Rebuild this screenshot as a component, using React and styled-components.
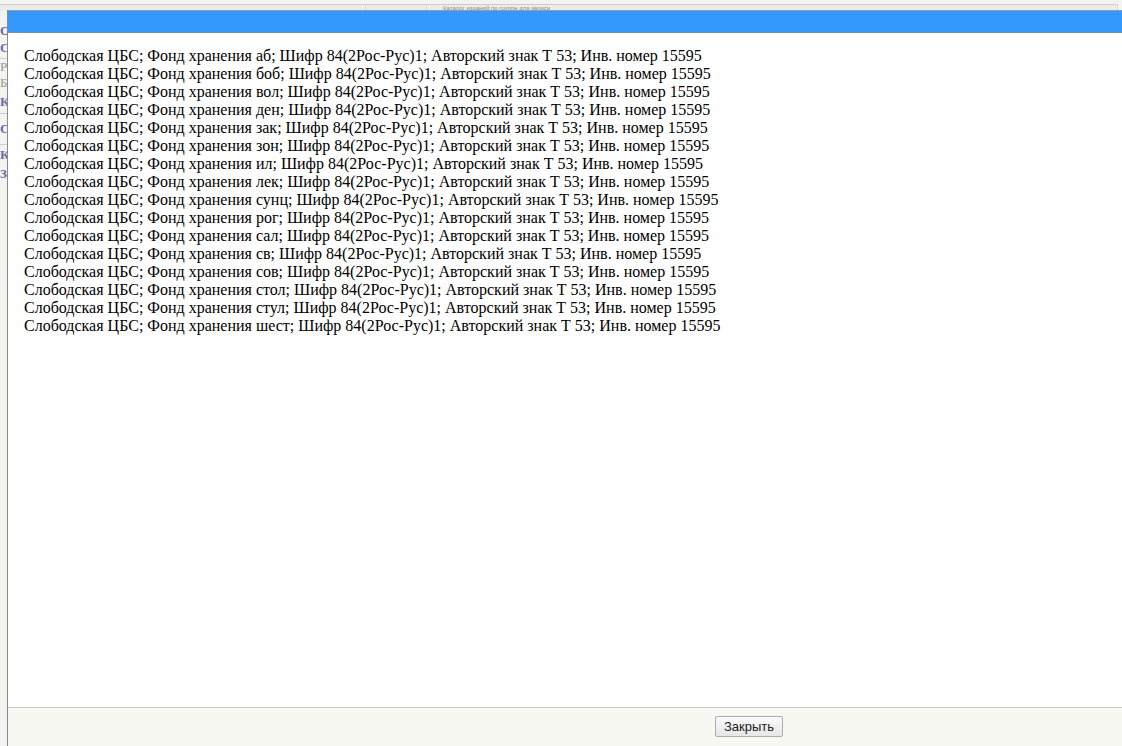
import React from 'react';
import styled, { createGlobalStyle } from 'styled-components';

const GlobalStyle = createGlobalStyle`
  html, body {
    margin: 0;
    padding: 0;
    width: 1122px;
    height: 746px;
    overflow: hidden;
    background: #ffffff;
  }
`;

const Page = styled.div`
  position: relative;
  width: 1122px;
  height: 746px;
  overflow: hidden;
  background: #f3f3f1;
  font-family: "Liberation Serif", serif;
`;

const BackTop = styled.div`
  height: 10px;
  display: flex;
  padding-right: 4px;
  box-sizing: border-box;
`;

const BackTopCell = styled.div`
  flex: ${p => (p.w ? `0 0 ${p.w}px` : '1')};
  height: 6px;
  border-right: 1px solid #d8d8d8;
  border-top: 1px solid #cccccc;
  background: #ececec;
  margin-top: 4px;
  font: 6px "Liberation Sans", sans-serif;
  color: #888;
  line-height: 6px;
  white-space: nowrap;
  padding-left: ${p => p.pad || 0}px;
`;

const BackSide = styled.div`
  display: flex;
  flex-direction: column;
  padding-top: 14px;
  width: 60px;
`;

const SideItem = styled.div`
  font-size: 13px;
  line-height: ${p => p.h}px;
  height: ${p => p.h}px;
  color: ${p => (p.muted ? '#999' : '#6a6aa8')};
  font-weight: ${p => (p.muted ? 'normal' : 'bold')};
  border-bottom: ${p => (p.line ? '1px solid #d0d0d0' : 'none')};
  white-space: nowrap;
`;

const Modal = styled.div`
  position: absolute;
  left: 7px;
  top: 10px;
  width: 1482px;
  display: flex;
  flex-direction: column;
  background: #ffffff;
  border-left: 1px solid #8a8a8a;
  border-top: 1px solid #9a9a9a;
`;

const TitleBar = styled.div`
  height: 21px;
  background: #3399ff;
  border-bottom: 1px solid #7a8fa8;
`;

const Body = styled.div`
  height: 674px;
  box-sizing: border-box;
  padding: 14px 16px 0 16px;
  font-family: "Liberation Serif", "Times New Roman", serif;
  font-size: 16px;
  line-height: 18px;
  color: #000;
`;

const Line = styled.div`
  white-space: nowrap;
`;

const Footer = styled.div`
  height: 53px;
  background: #f8f8f2;
  border-top: 1px solid #c8c8c8;
  display: flex;
  justify-content: center;
  align-items: flex-start;
  padding-top: 8px;
  box-sizing: border-box;
`;

const Button = styled.button`
  height: 21px;
  padding: 0 8px;
  font-family: "Liberation Sans", Arial, sans-serif;
  font-size: 13px;
  color: #222;
  background: linear-gradient(#fafafa, #e6e6e6);
  border: 1px solid #adadad;
  border-radius: 2px;
  cursor: pointer;
`;

const funds = ['аб', 'боб', 'вол', 'ден', 'зак', 'зон', 'ил', 'лек', 'сунц', 'рог', 'сал', 'св', 'сов', 'стол', 'стул', 'шест'];

export default function App() {
  return (
    <Page>
      <GlobalStyle />
      <BackTop>
        <BackTopCell w={365} />
        <BackTopCell w={60} />
        <BackTopCell pad={16}>Каталог изданий по группе для записи</BackTopCell>
      </BackTop>
      <BackSide>
        <SideItem h={14}>От</SideItem>
        <SideItem h={20} line>Св</SideItem>
        <SideItem h={16} muted>Ро</SideItem>
        <SideItem h={16} muted>Бі</SideItem>
        <SideItem h={22} line>Ко</SideItem>
        <SideItem h={30} line>Со</SideItem>
        <SideItem h={20}>Ко</SideItem>
        <SideItem h={18}>Зе</SideItem>
      </BackSide>
      <Modal>
        <TitleBar />
        <Body>
          {funds.map(f => (
            <Line key={f}>
              Слободская ЦБС; Фонд хранения {f}; Шифр 84(2Рос-Рус)1; Авторский знак Т 53; Инв. номер 15595
            </Line>
          ))}
        </Body>
        <Footer>
          <Button>Закрыть</Button>
        </Footer>
      </Modal>
    </Page>
  );
}
